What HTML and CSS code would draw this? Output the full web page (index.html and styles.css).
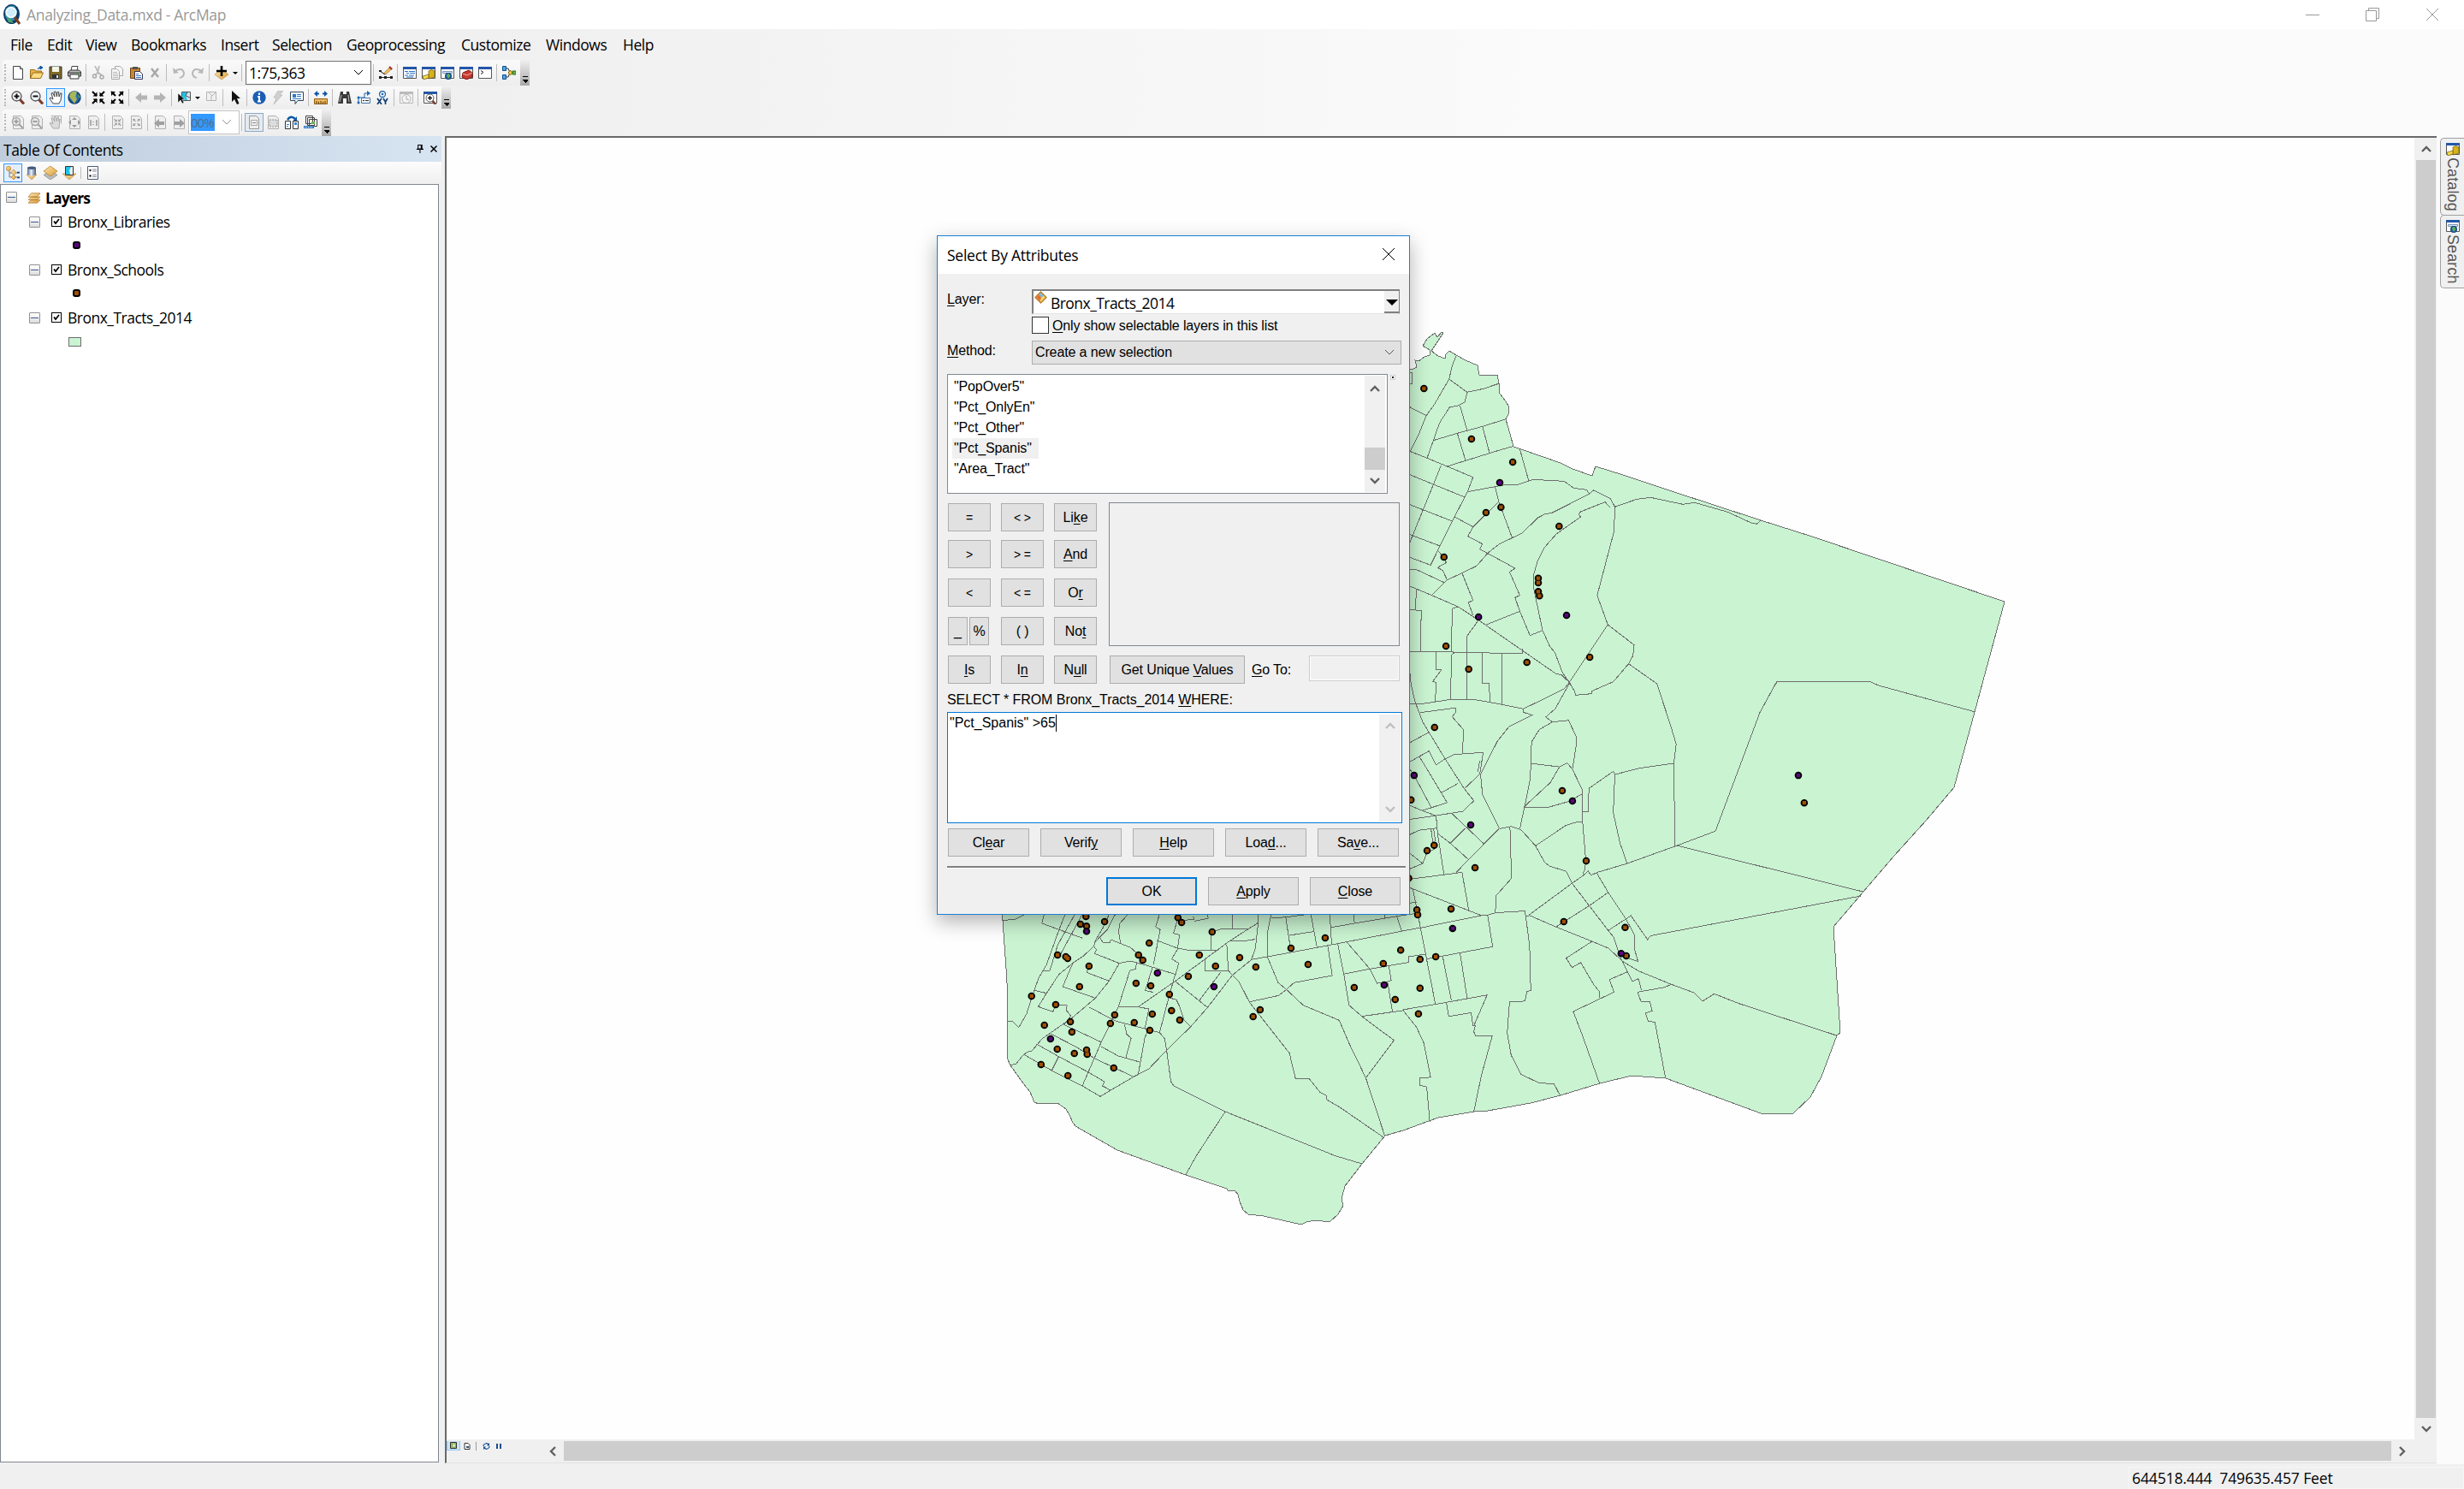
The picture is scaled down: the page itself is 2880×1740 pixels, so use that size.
FILE: index.html
```html
<!DOCTYPE html>
<html lang="en">
<head>
<meta charset="utf-8">
<title>Analyzing_Data.mxd - ArcMap</title>
<link rel="stylesheet" href="styles.css">
</head>
<body>
<svg class="defs" width="0" height="0" aria-hidden="true">
  <defs>
    <linearGradient id="gold" x1="0" y1="0" x2="1" y2="1"><stop offset="0" stop-color="#fde6a8"/><stop offset="1" stop-color="#dc9c3c"/></linearGradient>
    <linearGradient id="steel" x1="0" x2="1"><stop offset="0" stop-color="#5a7090"/><stop offset=".45" stop-color="#e4eefb"/><stop offset="1" stop-color="#45597a"/></linearGradient>
    <radialGradient id="sea"><stop offset="0" stop-color="#4aa0e0"/><stop offset="1" stop-color="#0c3a78"/></radialGradient>
  </defs>
  <symbol id="app" viewBox="0 0 20 24"><ellipse cx="9.500" cy="11.500" rx="9.500" ry="11.500" fill="#0d3b66"/><path d="M2 7Q6 0 13 2L16 8 14 18 6 21 2 14Z" fill="#2f8bb5"/><path d="M4 15l5 3 3 4-6-1z" fill="#4aa564"/><circle cx="9" cy="9.500" r="5.800" fill="#cdeefa" stroke="#f4fbff" stroke-width="1.800"/><path d="M13 15l6 8" stroke="#7a3b1d" stroke-width="3"/></symbol>
  <symbol id="new" viewBox="0 0 16 16"><path d="M2.500.5h8l3 3v12h-11z" fill="#fff" stroke="#444"/><path d="M10.500.5v3h3" fill="#cfe0f5" stroke="#444"/></symbol>
  <symbol id="open" viewBox="0 0 16 16"><path d="M.5 14.500v-10h5l1 1.500h7v3" fill="#e9b64c" stroke="#9a6b14"/><path d="M.5 14.500l3-6.500h12l-3 6.500z" fill="#fbdc84" stroke="#9a6b14"/><path d="M9 4q1-3 4-2M12 0l3 2-3 2z" fill="#0b57a4" stroke="#0b57a4"/></symbol>
  <symbol id="save" viewBox="0 0 16 16"><path d="M1 1h14v14H1z" fill="#806a22" stroke="#333"/><path d="M4 1h8v6H4z" fill="#f3f3e8"/><path d="M4 10h8v5H4z" fill="#333"/><path d="M9 11h2v3H9z" fill="#eee"/></symbol>
  <symbol id="print" viewBox="0 0 16 16"><path d="M4 6L5 .5h7L11 6" fill="#fff" stroke="#444"/><path d="M.5 7l3-2h10l2 2v5H.5z" fill="#bbb" stroke="#333"/><path d="M3 10h10v5H3z" fill="#fff" stroke="#333"/><path d="M1 8h14" stroke="#333"/><path d="M12 9h2v1h-2z" fill="#2a2"/></symbol>
  <symbol id="cut" viewBox="0 0 16 16"><path d="M4 0l5 10M9 0L7 8l-3 3M8 8l4 3" stroke="#b5b5b5" stroke-width="1.600" fill="none"/><circle cx="3.500" cy="12" r="2" fill="none" stroke="#aaa" stroke-width="1.500"/><circle cx="12" cy="13" r="2" fill="none" stroke="#aaa" stroke-width="1.500"/></symbol>
  <symbol id="copy" viewBox="0 0 16 16"><path d="M5.500.5h6l3 3v8h-9z" fill="#f4f4f4" stroke="#aaa"/><path d="M1.500 3.500h6l3 3v9h-9z" fill="#f4f4f4" stroke="#aaa"/><path d="M3 7.500h5M3 9.500h6M3 11.500h6M3 13.500h6" stroke="#bbb"/></symbol>
  <symbol id="paste" viewBox="0 0 16 16"><path d="M1.500 2.500h11v12h-11z" fill="#c98532" stroke="#6b4413"/><path d="M4 1h6v3H4z" fill="#555"/><path d="M6.500 6.500h6l3 3v6h-9z" fill="#fff" stroke="#335"/><path d="M8 9.500h3M8 11.500h6M8 13.500h6" stroke="#3d74b8"/></symbol>
  <symbol id="del" viewBox="0 0 16 16"><path d="M4 3l8 10M12 3L4 13" stroke="#a8a8a8" stroke-width="2.500"/></symbol>
  <symbol id="undo" viewBox="0 0 16 16"><path d="M3 6q9-5 11 2 0 5-5 6" stroke="#b8b8b8" stroke-width="2" fill="none"/><path d="M1 2l1 7 6-1z" fill="#b8b8b8"/></symbol>
  <symbol id="redo" viewBox="0 0 16 16"><path d="M13 6Q4 1 2 8q0 5 5 6" stroke="#b8b8b8" stroke-width="2" fill="none"/><path d="M15 2l-1 7-6-1z" fill="#b8b8b8"/></symbol>
  <symbol id="add" viewBox="0 0 16 16"><path d="M8 4l8 6-8 6-8-6z" fill="url(#gold)" stroke="#b88434" stroke-width=".6"/><path d="M8 0v12M2 6h12" stroke="#000" stroke-width="2.600"/></symbol>
  <symbol id="edit" viewBox="0 0 16 16"><path d="M5 9L13 1l2.500 2L8 10z" fill="#edbd55" stroke="#966" stroke-width=".6"/><path d="M12 1l3 3" stroke="#a52f24" stroke-width="2"/><path d="M1 6l6 4M1 13.500h14" stroke="#222" fill="none"/><path d="M0 12h3v3H0zM6 12h3v3H6zM13 12h3v3h-3zM0 5h3v2H0z" fill="#222"/></symbol>
  <symbol id="win" viewBox="0 0 16 16"><path d="M.5 1.500h15v13H.5z" fill="#fff" stroke="#555"/><path d="M0 1h16v3H0z" fill="#2357a8"/></symbol>
  <symbol id="toc" viewBox="0 0 16 16"><use href="#win"/><path d="M2 6.500h4M7 6.500h7M4 8.500h3M8 8.500h6M2 11h4M7 11h6M4 13h8" stroke="#2a72c8"/></symbol>
  <symbol id="catalog" viewBox="0 0 16 16"><use href="#win"/><path d="M8 6q3-3 7 0v7l-7 2z" fill="#d8b21e" stroke="#6b5608" stroke-width=".7"/><path d="M1 12l7-2v4l-6 2z" fill="#f3d94b" stroke="#6b5608" stroke-width=".7"/></symbol>
  <symbol id="search" viewBox="0 0 16 16"><use href="#win"/><path d="M2.500 6.500h11v2h-11z" fill="#dceafa" stroke="#7a93b5"/><circle cx="9" cy="12" r="4" fill="url(#sea)"/><path d="M7 10l3-1 1 3-2 3z" fill="#5fb54a"/></symbol>
  <symbol id="toolbox" viewBox="0 0 16 16"><use href="#win"/><path d="M4 8l7-3 4 3v5l-7 3-5-3z" fill="#c93a2e" stroke="#7a1610"/><path d="M4 9l5 2 6-3" stroke="#f5b5a8" fill="none"/></symbol>
  <symbol id="python" viewBox="0 0 16 16"><use href="#win"/><path d="M3 5.500l3 2-3 2" stroke="#222" fill="none"/></symbol>
  <symbol id="model" viewBox="0 0 16 16"><path d="M4 3h3l2 5h3M4 13h3l2-5" stroke="#333" fill="none"/><path d="M.5.5h4v5h-4zM.5 10.500h4v5h-4z" fill="#4aa3e8" stroke="#12528f"/><path d="M7 8l2.500-3L12 8l-2.500 3z" fill="#f0c64c" stroke="#886510"/><path d="M12 6h4v4h-4z" fill="#63b83e" stroke="#2b6d14"/></symbol>
  <symbol id="zin" viewBox="0 0 16 16"><path d="M10 10l5 5.500" stroke="#7e3a2a" stroke-width="3"/><circle cx="6.500" cy="6.500" r="5.500" fill="#f2f7fc" stroke="#555" stroke-width="1.300"/><path d="M3.500 6.500h6M6.500 3.500v6" stroke="#111" stroke-width="2"/></symbol>
  <symbol id="zout" viewBox="0 0 16 16"><path d="M10 10l5 5.500" stroke="#7e3a2a" stroke-width="3"/><circle cx="6.500" cy="6.500" r="5.500" fill="#f2f7fc" stroke="#555" stroke-width="1.300"/><path d="M3.500 6.500h6" stroke="#111" stroke-width="2"/></symbol>
  <symbol id="hand" viewBox="0 0 16 16"><path d="M5 15L1 9l1-1 3 2L3 3l1.500-.5L7 7 6 1.500 8 1l1.500 6L10 1.500h1.500L12 7l1.500-4H15l-1 8-2 4z" fill="#fff" stroke="#333" stroke-width=".9"/></symbol>
  <symbol id="globe" viewBox="0 0 16 16"><circle cx="8" cy="8" r="7.700" fill="url(#sea)"/><path d="M3 3q5-4 8-1l-2 5 2 3-3 5-3-4-3-4z" fill="#a9b75a"/><path d="M12 4l3 3-2 2z" fill="#5d9c43"/></symbol>
  <symbol id="fixin" viewBox="0 0 16 16"><path d="M1 1l5 5M15 1l-5 5M1 15l5-5M15 15l-5-5" stroke="currentColor" stroke-width="2"/><path d="M6.500 1.500v5h-5zM9.500 1.500v5h5zM6.500 14.500v-5h-5zM9.500 14.500v-5h5z" fill="currentColor"/></symbol>
  <symbol id="fixout" viewBox="0 0 16 16"><path d="M1 1l5 5M15 1l-5 5M1 15l5-5M15 15l-5-5" stroke="currentColor" stroke-width="2"/><path d="M1 6V1h5zM15 6V1h-5zM1 10v5h5zM15 10v5h-5z" fill="currentColor"/></symbol>
  <symbol id="back" viewBox="0 0 16 16"><path d="M1 8l7-6v3.500h7v5H8V14z" fill="#b4b4b4"/></symbol>
  <symbol id="fwd" viewBox="0 0 16 16"><path d="M15 8L8 2v3.500H1v5h7V14z" fill="#b4b4b4"/></symbol>
  <symbol id="selfeat" viewBox="0 0 16 16"><path d="M5.500 1.500h10v10h-10z" fill="#d8e6ee" stroke="#555"/><path d="M6 2h6l-2 4 2 5H6z" fill="#1fc3ea"/><path d="M12 2l-2 4 5 2" stroke="#555" fill="none"/><path d="M1 3v11l3-3 2 4 2-1-2-4h3z" fill="#111" stroke="#fff" stroke-width=".5"/></symbol>
  <symbol id="clrsel" viewBox="0 0 16 16"><path d="M2.500 1.500h11v10h-11z" fill="#f0f0f0" stroke="#b5b5b5"/><path d="M5 2l4 4 4-4M8 6v5" stroke="#b5b5b5" fill="none"/></symbol>
  <symbol id="arrow" viewBox="0 0 16 16"><path d="M4 0v13l3-3 3 6 2.500-1L10 9h4z" fill="#111"/></symbol>
  <symbol id="info" viewBox="0 0 16 16"><circle cx="8" cy="8" r="7.700" fill="#1b5fb4"/><path d="M8 2.500v2.500M6 7h2v5.500M6 12.500h4" stroke="#fff" stroke-width="2" fill="none"/></symbol>
  <symbol id="bolt" viewBox="0 0 16 16"><path d="M8 0h6l-4 5h3L3 16l3-8H3z" fill="#d0d0d0" stroke="#b0b0b0" stroke-width=".6"/></symbol>
  <symbol id="popup" viewBox="0 0 16 16"><path d="M.5 1.500h15v10H9l-3 4v-4H.5z" fill="#fff" stroke="#345"/><path d="M3 4h4v4H3z" fill="#2a78c8"/><path d="M8 4.500h5M8 6.500h5M3 9.500h10" stroke="#2a78c8"/></symbol>
  <symbol id="measure" viewBox="0 0 16 16"><path d="M0 3.500L4 0v2.500h2v2H4V7zM16 3.500L12 0v2.500h-2v2h2V7z" fill="#0e57a5"/><path d="M.5 9.500h15v6H.5z" fill="#e9b45c" stroke="#915f14"/><path d="M3 12v3M5.500 13v2M8 12v3M10.500 13v2M13 12v3" stroke="#5d3c08"/></symbol>
  <symbol id="find" viewBox="0 0 16 16"><path d="M3 1h3v3h4V1h3l3 14h-6V9H6v6H0z" fill="#3b3b3b"/><path d="M4 5L2 13M12 5l1 8" stroke="#bbb"/></symbol>
  <symbol id="route" viewBox="0 0 16 16"><path d="M2 14V8h7V3h4" stroke="#1a66b0" fill="none"/><path d="M12 0l4 3-4 3z" fill="#1a66b0"/><circle cx="2" cy="14" r="1.500" fill="#1a66b0"/><circle cx="2" cy="8" r="1.500" fill="#1a66b0"/><path d="M5.500 8.500h10v6h-10z" fill="#eef4fb" stroke="#4c77a5"/><path d="M7 11.500h2M10 11.500h4" stroke="#333"/></symbol>
  <symbol id="xy" viewBox="0 0 16 16"><circle cx="8" cy="4" r="3.500" fill="none" stroke="#1a66b0" stroke-width="1.300"/><circle cx="8" cy="4" r="1.300" fill="#1a66b0"/><path d="M2 9l5 7M7 9l-5 7M9 9l2.500 4V16M14 9l-2.500 4" stroke="#123f75" stroke-width="1.700" fill="none"/></symbol>
  <symbol id="time" viewBox="0 0 16 16"><path d="M.5 1.500h15v13H.5z" fill="#f1f1f1" stroke="#bbb"/><path d="M0 1h16v3H0z" fill="#bbb"/><circle cx="8" cy="9.500" r="5" fill="#f5f5f5" stroke="#b5b5b5"/><path d="M8 6v4l3 1" stroke="#aaa" fill="none"/></symbol>
  <symbol id="viewer" viewBox="0 0 16 16"><use href="#win"/><path d="M10 11l4 5" stroke="#7e3a2a" stroke-width="2.500"/><circle cx="7.500" cy="8.500" r="4.500" fill="#fff" stroke="#555"/><path d="M5 8.500h5M7.500 6v5" stroke="#111" stroke-width="1.400"/></symbol>
  <symbol id="gpage" viewBox="0 0 16 16"><path d="M2.500.5h9l3 3v12h-12z" fill="#eee" stroke="#b0b0b0"/></symbol>
  <symbol id="gzin" viewBox="0 0 16 16"><use href="#gpage"/><circle cx="6" cy="7" r="4.500" fill="#e8e8e8" stroke="#a5a5a5" stroke-width="1.500"/><path d="M3.500 7h5M6 4.500v5M9 10l5 5" stroke="#a0a0a0" stroke-width="1.800"/></symbol>
  <symbol id="gzout" viewBox="0 0 16 16"><use href="#gpage"/><circle cx="6" cy="7" r="4.500" fill="#e8e8e8" stroke="#a5a5a5" stroke-width="1.500"/><path d="M3.500 7h5M9 10l5 5" stroke="#a0a0a0" stroke-width="1.800"/></symbol>
  <symbol id="ghand" viewBox="0 0 16 16"><path d="M2.500.5h12v9" fill="none" stroke="#b0b0b0"/><path d="M5 15L1 9l1-1 3 2L3 3l1.500-.5L7 7 6 2 8 1.500 9.500 7 10 2h1.500L12 7l1-3-1 11z" fill="#ddd" stroke="#aaa"/></symbol>
  <symbol id="gwhole" viewBox="0 0 16 16"><use href="#gpage"/><path d="M8 2l3 3H5zM8 14l3-3H5zM1 8l3-3v6zM15 8l-3-3v6z" fill="#999"/></symbol>
  <symbol id="g11" viewBox="0 0 16 16"><use href="#gpage"/><path d="M4 6h1v6M8 7v1M8 10v1M11 6h1v6" stroke="#999" stroke-width="1.500" fill="none"/></symbol>
  <symbol id="gin" viewBox="0 0 16 16"><use href="#gpage"/><g transform="translate(4 3.500) scale(.56)" color="#999"><use href="#fixin" width="16" height="16"/></g></symbol>
  <symbol id="gout" viewBox="0 0 16 16"><use href="#gpage"/><g transform="translate(4 3.500) scale(.56)" color="#999"><use href="#fixout" width="16" height="16"/></g></symbol>
  <symbol id="gback" viewBox="0 0 16 16"><use href="#gpage"/><path d="M1 9l6-5v3h6v4H7v3z" fill="#a0a0a0"/></symbol>
  <symbol id="gfwd" viewBox="0 0 16 16"><use href="#gpage"/><path d="M15 9L9 4v3H3v4h6v3z" fill="#a0a0a0"/></symbol>
  <symbol id="gdraft" viewBox="0 0 16 16"><path d="M2.500.5h8l3 3v12h-11z" fill="#eee" stroke="#999"/><path d="M4.500 5.500h7v6h-7z" fill="none" stroke="#aaa"/><path d="M6 8.500h4" stroke="#888"/></symbol>
  <symbol id="gfocus" viewBox="0 0 16 16"><use href="#gpage"/><path d="M4 5h9v8H4z" fill="#ddd" stroke="#999" stroke-dasharray="2 1"/></symbol>
  <symbol id="change" viewBox="0 0 16 16"><path d="M3 5q4-6 9-1" stroke="#0e57a5" stroke-width="2.500" fill="none"/><path d="M14 1v6H9z" fill="#0e57a5"/><path d="M.5 6.500h6v9h-6zM9.500 6.500h6v9h-6z" fill="#fff" stroke="#333"/><path d="M2 10.500h3M2 12.500h2" stroke="#3a82c8"/><path d="M11 8h3v3h-3z" fill="#3a82c8"/></symbol>
  <symbol id="ddp" viewBox="0 0 16 16"><path d="M2.500.5h8v9h-8zM4.500 2.500h8v9h-8zM6.500 4.500h9v8h-9z" fill="#fff" stroke="#444"/><path d="M9 7h4v3H9z" fill="#6db255"/><path d="M0 12h12v3H0z" fill="#2a78c8"/><path d="M1 13.500h10" stroke="#fff" stroke-dasharray="1 1"/></symbol>
  <symbol id="tree" viewBox="0 0 16 16"><path d="M4 5v8h5M4 8h5M10 8h6M10 13h6" stroke="#777" fill="none"/><circle cx="3" cy="3" r="2.700" fill="url(#gold)" stroke="#b88434" stroke-width=".7"/><path d="M9 4l3 3.500L9 11 6 7.500zM9 10l3 3-3 3-3-3z" fill="url(#gold)" stroke="#b88434" stroke-width=".7"/><path d="M13 7.500h3M13 13.500h3" stroke="#123f75" stroke-width="1.500"/></symbol>
  <symbol id="source" viewBox="0 0 16 16"><path d="M2 10h12l-6 6z" fill="url(#gold)" stroke="#b88434" stroke-width=".6"/><path d="M3 2q5-3 10 0v8q-5 3-10 0z" fill="url(#steel)"/><ellipse cx="8" cy="2.200" rx="5" ry="1.700" fill="#44597b"/></symbol>
  <symbol id="vis" viewBox="0 0 16 16"><path d="M8 5l8 5.500L8 16 0 10.500z" fill="#bbb" stroke="#777" stroke-width=".6"/><path d="M8 0l8 6-8 6-8-6z" fill="url(#gold)" stroke="#b88434" stroke-width=".8"/></symbol>
  <symbol id="tocsel" viewBox="0 0 16 16"><path d="M0 9h16l-8 7z" fill="url(#gold)" stroke="#b88434" stroke-width=".6"/><path d="M3.500.5h9v10h-9z" fill="#e8eef2" stroke="#333"/><path d="M4 1h6L8 5l1 5H4z" fill="#1fc3ea"/></symbol>
  <symbol id="opts" viewBox="0 0 16 16"><path d="M2.500.5h12v15h-12z" fill="#fff" stroke="#4b5a74"/><circle cx="5.500" cy="5" r="1.200" fill="#222"/><circle cx="5.500" cy="11.500" r="1.200" fill="#222"/><path d="M8 4h5M8 6h5M8 10.500h5M8 12.500h5" stroke="#889"/></symbol>
  <symbol id="frame" viewBox="0 0 16 16"><path d="M0 15l4-4h12l-4 4zM0 11l4-4h12l-4 4zM0 7l4-5h12l-4 5z" fill="url(#gold)" stroke="#a8742a" stroke-width=".8"/></symbol>
  <symbol id="layer" viewBox="0 0 16 16"><path d="M8 0l8 8-8 8-8-8z" fill="#b88434"/><path d="M8 2.500l5.500 5.500L8 13.500 2.500 8z" fill="#f7dc6a"/><path d="M8 2.500l3.500 3.500-3 2.500L6 4.500z" fill="#77b7e8"/><path d="M2.500 8L6 4.500 8.500 8.500 7 12.500z" fill="#ee6a2d"/></symbol>
  <symbol id="pin" viewBox="0 0 10 12"><path d="M3 1.500h5v5H3zM7 1v6M1 7h9M5.500 7v5" stroke="#000" stroke-width="1.200" fill="none"/></symbol>
  <symbol id="x" viewBox="0 0 16 16"><path d="M1 1l14 14M15 1L1 15" stroke="currentColor" stroke-width="var(--w,1)" fill="none"/></symbol>
  <symbol id="chev" viewBox="0 0 12 8"><path d="M1 1l5 5 5-5" stroke="currentColor" stroke-width="var(--w,1)" fill="none"/></symbol>
  <symbol id="dataview" viewBox="0 0 8 8"><path d="M.5.5h7v7h-7z" fill="#9cb55c" stroke="#333"/><path d="M3 4l2-2 1 3-2 1z" fill="#dcecf5"/></symbol>
  <symbol id="layoutview" viewBox="0 0 8 8"><path d="M1 .5h4l2 2v5H1z" fill="#fff" stroke="#333"/><path d="M3 4h3v2H3z" fill="#357"/></symbol>
  <symbol id="refresh" viewBox="0 0 9 8"><path d="M1 4V3q3-4 6-1M8 4v1Q5 9 2 6" stroke="#134f8f" stroke-width="1.200" fill="none"/><path d="M8 0v3.500H5zM1 8V4.500h3z" fill="#134f8f"/></symbol>
</svg>

<div class="titlebar">
  <svg class="appicon"><use href="#app"/></svg>
  <span class="apptitle">Analyzing_Data.mxd - ArcMap</span>
  <div class="winctl">
    <svg viewBox="0 0 16 16"><path d="M0 8.500h16" stroke="#999"/></svg>
    <svg viewBox="0 0 16 16"><path d="M.5 3.500h12v12H.5zM3.500 3.500v-3h12v12h-3" stroke="#999" fill="none"/></svg>
    <svg viewBox="0 0 16 16" class="grey"><use href="#x"/></svg>
  </div>
</div>

<div class="chrome">
  <nav class="menu"><span>File</span><span>Edit</span><span>View</span><span>Bookmarks</span><span>Insert</span><span>Selection</span><span>Geoprocessing</span><span>Customize</span><span>Windows</span><span>Help</span></nav>

  <div class="bar bar1">
    <i class="grip"></i>
    <b><svg><use href="#new"/></svg></b><b><svg><use href="#open"/></svg></b><b><svg><use href="#save"/></svg></b><b><svg><use href="#print"/></svg></b>
    <i class="sep"></i>
    <b><svg><use href="#cut"/></svg></b><b><svg><use href="#copy"/></svg></b><b><svg><use href="#paste"/></svg></b><b><svg><use href="#del"/></svg></b>
    <i class="sep"></i>
    <b><svg><use href="#undo"/></svg></b><b><svg><use href="#redo"/></svg></b>
    <i class="sep"></i>
    <b><svg><use href="#add"/></svg></b><i class="drop"></i>
    <i class="sep"></i>
    <div class="scale"><span>1:75,363</span><svg class="chev"><use href="#chev"/></svg></div>
    <i class="sep"></i>
    <b><svg><use href="#edit"/></svg></b>
    <i class="sep"></i>
    <b><svg><use href="#toc"/></svg></b><b><svg><use href="#catalog"/></svg></b><b><svg><use href="#search"/></svg></b><b><svg><use href="#toolbox"/></svg></b><b><svg><use href="#python"/></svg></b>
    <i class="sep"></i>
    <b><svg><use href="#model"/></svg></b>
    <i class="end"></i>
  </div>

  <div class="bar bar2">
    <i class="grip"></i>
    <b><svg><use href="#zin"/></svg></b><b><svg><use href="#zout"/></svg></b><b class="on"><svg><use href="#hand"/></svg></b><b><svg><use href="#globe"/></svg></b>
    <i class="sep"></i>
    <b><svg><use href="#fixin"/></svg></b><b><svg><use href="#fixout"/></svg></b>
    <i class="sep"></i>
    <b><svg><use href="#back"/></svg></b><b><svg><use href="#fwd"/></svg></b>
    <i class="sep"></i>
    <b><svg><use href="#selfeat"/></svg></b><i class="drop"></i><b><svg><use href="#clrsel"/></svg></b>
    <i class="sep"></i>
    <b><svg><use href="#arrow"/></svg></b>
    <i class="sep"></i>
    <b><svg><use href="#info"/></svg></b><b><svg><use href="#bolt"/></svg></b><b><svg><use href="#popup"/></svg></b>
    <i class="sep"></i>
    <b><svg><use href="#measure"/></svg></b>
    <i class="sep"></i>
    <b><svg><use href="#find"/></svg></b><b><svg><use href="#route"/></svg></b><b><svg><use href="#xy"/></svg></b>
    <i class="sep"></i>
    <b><svg><use href="#time"/></svg></b>
    <i class="sep"></i>
    <b><svg><use href="#viewer"/></svg></b>
    <i class="end"></i>
  </div>

  <div class="bar bar3">
    <i class="grip"></i>
    <b><svg><use href="#gzin"/></svg></b><b><svg><use href="#gzout"/></svg></b><b><svg><use href="#ghand"/></svg></b><b><svg><use href="#gwhole"/></svg></b><b><svg><use href="#g11"/></svg></b>
    <i class="sep"></i>
    <b><svg><use href="#gin"/></svg></b><b><svg><use href="#gout"/></svg></b>
    <i class="sep"></i>
    <b><svg><use href="#gback"/></svg></b><b><svg><use href="#gfwd"/></svg></b>
    <div class="percent"><span>00%</span><svg class="chev"><use href="#chev"/></svg></div>
    <i class="sep"></i>
    <b class="on dim"><svg><use href="#gdraft"/></svg></b><b><svg><use href="#gfocus"/></svg></b><b><svg><use href="#change"/></svg></b><b><svg><use href="#ddp"/></svg></b>
    <i class="end"></i>
  </div>
</div>

<main class="work">
  <aside class="tocpane">
    <header class="tochead"><span>Table Of Contents</span><svg class="pin"><use href="#pin"/></svg><svg class="tclose"><use href="#x"/></svg></header>
    <div class="tocbar">
      <b class="on"><svg><use href="#tree"/></svg></b><b><svg><use href="#source"/></svg></b><b><svg><use href="#vis"/></svg></b><b><svg><use href="#tocsel"/></svg></b>
      <i class="sep"></i>
      <b><svg><use href="#opts"/></svg></b>
    </div>
    <div class="tree">
      <div class="node root"><i class="exp"></i><svg class="frame"><use href="#frame"/></svg><strong>Layers</strong></div>
      <div class="node"><i class="exp"></i><i class="chk"><svg viewBox="0 0 8 8"><path d="M1 3.500l2 2.500 4-5" stroke="#000" stroke-width="1.800" fill="none"/></svg></i><span>Bronx_Libraries</span></div>
      <div class="sym"><i class="dot lib"></i></div>
      <div class="node"><i class="exp"></i><i class="chk"><svg viewBox="0 0 8 8"><path d="M1 3.500l2 2.500 4-5" stroke="#000" stroke-width="1.800" fill="none"/></svg></i><span>Bronx_Schools</span></div>
      <div class="sym"><i class="dot sch"></i></div>
      <div class="node"><i class="exp"></i><i class="chk"><svg viewBox="0 0 8 8"><path d="M1 3.500l2 2.500 4-5" stroke="#000" stroke-width="1.800" fill="none"/></svg></i><span>Bronx_Tracts_2014</span></div>
      <div class="sym"><i class="patch"></i></div>
    </div>
  </aside>

  <section class="mapframe">
    <div class="maprow">
      <svg class="map" viewBox="522 162 2300 1521" width="2300" height="1521">
        <path class="land" d="M1500 432H1652L1656 430 1654 422 1658 423 1665 418 1671 416V410L1663 405 1668 397 1677 390 1680 395 1685 389 1687 390 1681 399 1673 411 1681 417 1689 420 1690 415 1694 411 1702 416 1713 422 1727 428 1729 439 1750 439 1752 449 1753 461 1760 470 1764 477 1763 485 1760 491 1765 508 1769 523 1778 526 1824 542 1838 549 1861 557 1863 551 1865 546 1897 556 1957 576 2003 591 2058 609 2118 628 2343 704 2308 833 2284 921 2251 960 2214 1001 2178 1043 2143 1084 2151 1208 2147 1211 2129 1259 2116 1283 2096 1302 2081 1303 2058 1302 1947 1261 1907 1258 1870 1267 1824 1281 1789 1290 1739 1299 1723 1300 1681 1307 1640 1322 1619 1328 1592 1361 1572 1387 1568 1402 1570 1410 1564 1420 1554 1429 1537 1427 1527 1429 1521 1432 1477 1422 1459 1420 1453 1415 1449 1405 1447 1397 1444 1393 1435 1392 1434 1390 1386 1374 1306 1345 1257 1317 1254 1313 1250 1304 1246 1297 1236 1290 1214 1291 1209 1289 1204 1277 1196 1267 1181 1246 1177 1237 1177 1195 1178 1167 1176 1133 1172 1077 1171 1050H1400V600Z"/>
        <g class="lines">
          <path transform="translate(1640 370) scale(.4592 .33333)" d="M135 140L125 175 117 222 80 310 59 350 40 415 17 478M117 222L163 268 204 256 243 238M163 268L157 303 138 316 119 320 95 370 86 400 77 437 61 499M145 316L163 402M77 437L138 412 202 388 262 362M138 412L159 507M202 388L220 481M280 458L255 467 112 528 61 499 17 475M17 320L59 350M97 524L17 795M112 528L178 566 164 617 125 720 70 874 17 847M17 557L157 636M17 662L125 720M131 705L178 740M17 767L94 807M164 617L234 599 260 593 290 593 331 574 410 580 434 604 467 610 474 625 485 611 527 640 539 670 537 755 494 980 521 1083 588 1154 585 1192 574 1220 535 1283 480 1316V1325L439 1330 437 1318 423 1285M297 467L320 580M234 599L243 650 277 776M243 652L178 740 165 773 202 800 195 818 285 885 271 898 297 980 285 988 297 1036 323 1121 355 1103M474 625L380 690 360 696 343 708 303 762 245 800 217 830 187 877 150 902 112 926 73 980M112 926L101 893 88 883 110 865 90 824M17 890H34L106 936M17 948L73 980 140 1020 192 1067 390 1256 402 1258 423 1285M150 902L178 998 166 1005 178 1050M34 960L31 1030M17 1030L46 1034 45 1177M140 1020L125 1027 123 1177M192 1067L162 1124V1345M212 1083L297 1036M17 1177H125L130 1181 304 1183V1168M84 1178V1240L97 1242 75 1283 84 1285 82 1352M130 1181L123 1190 121 1345M201 1182V1288H218L222 1355M252 1183V1363M17 1360H50L121 1345H180L249 1362 306 1378 378 1330 410 1308 423 1285M539 670L595 643 630 637 712 661 742 655 826 688 886 726 900 730 910 718M527 672L514 653 450 688 447 697 452 705 390 765 360 812 343 857 333 905V960L355 1103 373 1158 386 1180 406 1252 423 1285M521 1083L423 1285M574 1220L646 1290M1454 1388L1210 1296 1188 1282H952L948 1292M17 200H23L22 240H17"/>
          <path transform="translate(1640 800) scale(.4592 .34444)" d="M17 -40L20 0 30 60 50 130 107 255 155 355 180 397 152 433 85 447 17 460M306 85V97L328 106 270 145 240 195 215 260 197 307 202 375 245 490M423 0L387 85 363 113 380 130 421 124 441 180 440 215 431 290M380 130L347 155 328 195 326 215 324 320 308 425 297 492M646 0L681 142 695 205 689 270 692 550M948 0L908 98 795 500 697 549 570 610 494 640 478 650 471 635 459 650 430 677 320 785M697 549L1172 706M1165 720L630 855 622 868 580 787 522 837M43 98L133 82V98L125 112 153 155 152 237M17 200L64 166M17 265L66 228 84 275 107 255 130 240 204 233 195 307 155 357M195 260L190 300M41 246L112 403 50 430M97 370L140 338M17 290L28 311 71 418M17 413L48 430 84 448 88 510 104 647M17 512L40 497 84 490M71 492L76 540M78 494L82 535M124 440L204 541M158 490L120 541M88 508L120 541 166 596M245 490L135 640M17 663L150 640 167 768M17 575L50 610 17 628M50 610L60 575 80 560M17 692L197 785H215L235 777 310 771 312 787H320M245 492L275 484 300 495 337 550 360 605 373 619 415 636 430 677 522 837 536 860 552 925 570 975 584 1010 599 1001 607 1040M272 486L276 660 236 720 235 777M337 550L415 480 440 470H457M457 374V435H471L473 355 535 297 539 308 535 438 552 540 570 610M539 308L600 287 689 270M324 270L398 282 418 269 431 290 456 360 457 470 465 600 463 630 457 645M398 282L375 335 310 415M310 419H370L420 400 456 374M492 640L522 708 568 800 588 850 590 905 598 942 565 928M522 708L475 752 389 825M320 785L389 825 481 874 522 897 560 943 600 975 683 1020 740 1048 762 1077 792 1052 855 1085 1105 1194M683 1020L665 1030 597 1046 606 1080 628 1078 634 1110 617 1118 624 1145 641 1148 668 1339M481 874L415 931 430 963 452 946 485 1020 500 1045 501 1068M570 978L525 1004 537 1046 433 1112 455 1188 500 1356M312 787L322 890 325 1040 315 1045 310 1077 271 1078 265 1185 275 1260 300 1325 347 1355 384 1357 400 1398M25 697L60 935 82 1086M17 744L34 741M45 828L197 787M215 785L228 892 60 934M101 927L123 1075M145 914L163 1067M0 1106L110 1081 214 1056 180 1160M110 1081L116 1129 173 1116 178 1160H184L180 1180 184 1195 227 1194 199 1330 180 1452M0 1108L34 1165 53 1220 70 1335 43 1338V1362L60 1368 68 1486"/>
          <path transform="translate(1150 1050) scale(.35714 .33333)" d="M62 80L105 75 135 58M197 58L190 90 323 142M266 58L245 115 205 235 180 280 158 345 140 407 114 455 95 435 77 433M298 58L242 165 215 258H195M322 58L245 210M410 58L390 105 365 150 360 170 325 205 290 230 245 270 205 335 178 382 226 400 235 375 272 378 270 395 285 415M430 58L405 110 360 160M166 325L205 335M472 58L445 90 441 120 447 158M380 140L390 158H413L415 147 480 175 507 200M360 170L368 182 363 196 443 230 480 222 535 238 630 270M443 230L410 292 365 352 290 420 190 495 155 540H145L130 550 105 583 88 587M340 245L338 263 410 292M290 232L258 312 365 352M500 225L497 250 478 255 440 383 384 507 322 660M552 245L528 325 555 332M627 292L505 383 440 384M343 383L430 432 575 473M505 383L540 390 527 458M898 58V88L865 110 800 155 627 292M575 58L562 102 577 112 555 235M640 58L620 125 640 130 634 180 615 215 638 230 620 292 605 350 575 473M567 150L633 177 670 184H768M805 152H850L887 146M743 128V182M747 120L778 109H865M813 58V109M640 82L688 75 685 65M690 82L735 72 730 58M723 215V256H800L795 165M898 88L888 180 875 218 813 272 732 385 677 452 598 535 540 600 490 628 415 675 381 697 322 660 222 606 131 550M627 294L732 385M776 260L705 360M800 256L835 295 870 368 1000 545 1020 635H1065L1100 682 1120 693 1122 708 1165 735 1305 838M870 365L965 343 990 322 1015 298 1140 273 1125 165M940 58L927 130V205L963 298 990 322 1045 377 1163 430 1195 510 1250 632 1312 835M875 217L1005 192 1187 155 1428 105M940 72L990 68 1062 58M988 70L1003 175M1000 132L1078 119M1070 58L1090 172M1132 58L1138 162M1138 104L1213 90 1312 72 1352 65 1410 56M1210 58L1213 90M1312 58V72M1352 67L1368 118M1187 155L1262 248 1287 300 1310 298M1158 162L1178 268 1195 377 1237 416 1342 500 1250 632M1178 268L1262 250 1390 227V207L1445 198M1325 238L1333 290 1310 298 1322 300 1337 400M1237 416L1375 395M605 350L630 358 640 380 655 428 677 452M575 473L592 495 598 535 612 645 622 660 790 750 1150 905 1238 933M790 750L695 905 660 973M285 415L262 445 385 507M384 522L440 555 513 577M220 478L300 522 365 565 490 628M172 513L245 557 342 612 395 645 388 660 415 675M460 443L468 480 482 492 465 560M535 470L527 490 505 620M245 557L222 606"/>
        </g>
        <g class="pts sch">
          <g transform="translate(1640 370) scale(.4592 .33333)"><path id="s1" d="M53 255h.1M174 432h.1M279 513h.1M249 671h.1M211 690h.1M397 738h.1M104 846h.1M344 920h.1M344 936h.1M344 967h.1M347 982h.1M109 1158h.1M167 1239h.1M315 1215h.1M475 1197h.1"/><use class="core" href="#s1"/></g>
          <g transform="translate(1640 800) scale(.4592 .34444)"><path id="s2" d="M80 148h.1M20 394h.1M405 363h.1M1021 404h.1M79 548h.1M61 566h.1M183 624h.1M466 601h.1M14 660h.1M35 767h.1M37 784h.1M122 764h.1M409 807h.1M565 827h.1M568 923h.1M83 926h.1M43 935h.1M43 1033h.1M39 1120h.1"/><use class="core" href="#s2"/></g>
          <g transform="translate(1150 1050) scale(.35714 .33333)"><path id="s3" d="M334 66h.1M316 93h.1M336 100h.1M395 84h.1M635 70h.1M647 87h.1M747 120h.1M541 159h.1M241 201h.1M268 207h.1M274 213h.1M344 240h.1M506 201h.1M520 219h.1M705 201h.1M758 240h.1M837 210h.1M890 243h.1M1005 177h.1M1117 141h.1M1061 234h.1M669 276h.1M498 300h.1M546 309h.1M313 312h.1M607 339h.1M156 345h.1M235 375h.1M614 396h.1M551 408h.1M428 411h.1M641 429h.1M492 438h.1M414 441h.1M283 435h.1M198 447h.1M288 471h.1M543 465h.1M904 393h.1M881 417h.1M240 531h.1M296 546h.1M336 534h.1M338 549h.1M187 585h.1M275 624h.1M425 597h.1M1212 315h.1M1307 231h.1M1364 184h.1M1346 357h.1"/><use class="core" href="#s3"/></g>
        </g>
        <g class="pts lib">
          <g transform="translate(1640 370) scale(.4592 .33333)"><path id="l1" d="M246 585h.1M192 1056h.1M416 1050h.1"/><use class="core" href="#l1"/></g>
          <g transform="translate(1640 800) scale(.4592 .34444)"><path id="l2" d="M28 311h.1M431 398h.1M172 479h.1M126 830h.1M555 915h.1M1006 311h.1"/><use class="core" href="#l2"/></g>
          <g transform="translate(1150 1050) scale(.35714 .33333)"><path id="l3" d="M336 118h.1M568 264h.1M753 312h.1M218 495h.1M1310 306h.1"/><use class="core" href="#l3"/></g>
        </g>
      </svg>
      <div class="vscroll"><svg class="chev up"><use href="#chev"/></svg><i></i><svg class="chev"><use href="#chev"/></svg></div>
    </div>
    <div class="hrow">
      <div class="viewbtns"><b class="on"><svg><use href="#dataview"/></svg></b><svg><use href="#layoutview"/></svg><i></i><svg class="rf"><use href="#refresh"/></svg><svg viewBox="0 0 8 8"><path d="M1 1h2v6H1zM5 1h2v6H5z" fill="#134f8f"/></svg></div>
      <svg class="chev left"><use href="#chev"/></svg><i class="thumb"></i><svg class="chev right"><use href="#chev"/></svg>
    </div>
  </section>

  <div class="dock">
    <div class="tab t1"><svg><use href="#catalog"/></svg><span>Catalog</span></div>
    <div class="tab t2"><svg><use href="#search"/></svg><span>Search</span></div>
  </div>
</main>

<footer class="status"><div class="coords">644518.444&nbsp; 749635.457 Feet</div></footer>

<div class="dialog">
  <header><span>Select By Attributes</span><svg><use href="#x"/></svg></header>
  <div class="body">
    <div class="field f1"><label><u>L</u>ayer:</label><div class="layersel"><svg><use href="#layer"/></svg><span>Bronx_Tracts_2014</span><i class="btn3"></i></div></div>
    <div class="only"><i></i><span><u>O</u>nly show selectable layers in this list</span></div>
    <div class="field f2"><label><u>M</u>ethod:</label><div class="method"><span>Create a new selection</span><svg class="chev"><use href="#chev"/></svg></div></div>
    <div class="listrow">
      <div class="list">
        <ul><li>"PopOver5"</li><li>"Pct_OnlyEn"</li><li>"Pct_Other"</li><li><em>"Pct_Spanis"</em></li><li>"Area_Tract"</li></ul>
        <div class="lscroll"><svg class="chev up"><use href="#chev"/></svg><i></i><svg class="chev"><use href="#chev"/></svg></div>
      </div>
      <i class="mini"></i>
    </div>
    <div class="ops">
      <div class="keys">
        <button class="s">=</button><button class="s">&lt; &gt;</button><button>Li<u>k</u>e</button>
        <button class="s">&gt;</button><button class="s">&gt; =</button><button><u>A</u>nd</button>
        <button class="s">&lt;</button><button class="s">&lt; =</button><button>O<u>r</u></button>
        <div class="pair"><button>_</button><button>%</button></div><button>( )</button><button>No<u>t</u></button>
        <button><u>I</u>s</button><button>I<u>n</u></button><button>N<u>u</u>ll</button>
      </div>
      <div class="vals">
        <div class="valbox"></div>
        <div class="uniq"><button>Get Unique <u>V</u>alues</button><span><u>G</u>o To:</span><i></i></div>
      </div>
    </div>
    <div class="where">SELECT * FROM Bronx_Tracts_2014 <u>W</u>HERE:</div>
    <div class="expr"><span>"Pct_Spanis" &gt;65</span><div class="escroll"><svg class="chev up"><use href="#chev"/></svg><svg class="chev"><use href="#chev"/></svg></div></div>
    <div class="acts"><button>Cl<u>e</u>ar</button><button>Verif<u>y</u></button><button><u>H</u>elp</button><button>Loa<u>d</u>...</button><button>Sa<u>v</u>e...</button></div>
    <hr>
    <div class="final"><button class="ok">OK</button><button><u>A</u>pply</button><button><u>C</u>lose</button></div>
  </div>
</div>
</body>
</html>
```
FILE: styles.css
```css
* { box-sizing: border-box; }
html, body { margin: 0; }
body {
  width: 2880px; height: 1740px; overflow: hidden; position: relative;
  display: flex; flex-direction: column;
  background: #f0f0f0; color: #000;
  font: 17.5px/24px "Open Sans", "Noto Sans", sans-serif; letter-spacing: -.45px;
}
.defs { position: absolute; }
svg { display: block; flex: none; }
i, em { font-style: normal; }
b { font-weight: normal; }
u { text-decoration: underline; text-underline-offset: 2px; text-decoration-thickness: 1px; }
.chev { width: 12px; height: 8px; }
.up { transform: rotate(180deg); }
.grey { color: #999; }

/* title bar */
.titlebar { height: 34px; flex: none; background: #fff; display: flex; align-items: center; padding-left: 2px; }
.appicon { width: 24px; height: 24px; }
.apptitle { color: #999; margin-left: 5px; padding-bottom: 1px; letter-spacing: -.32px; }
.winctl { margin-left: auto; display: flex; gap: 54px; padding-right: 29px; }
.winctl svg { width: 16px; height: 16px; }

/* menu and toolbars */
.chrome { height: 125px; flex: none; background: linear-gradient(90deg, #f0f0f0 0, #f0f0f0 20%, #fbfbfb 65%); }
.menu { display: grid; grid-template-columns: 43px 45px 53px 105px 60px 87px 134px 99px 90px 60px; padding: 6px 0 0 12px; height: 36px; }
.bar { display: flex; align-items: center; width: max-content; background: linear-gradient(#fafafa, #ededed); border-radius: 4px 0 0 4px; margin-left: 3px; }
.bar1 { height: 30px; }
.bar2 { height: 26px; margin-top: 1px; }
.bar3 { height: 31px; margin-top: 1px; padding-bottom: 2px; }
.bar b, .tocbar b { width: 22px; height: 22px; flex: none; display: flex; align-items: center; justify-content: center; }
.bar b svg, .tocbar b svg { width: 16px; height: 16px; }
b.on { background: #e5effa; border: 1px solid #3399ff; }
b.dim { background: #e6ebf1; border-color: #8aa8c8; }
.grip { width: 2px; height: 20px; margin: 0 3px 0 2px; border-left: 2px dotted #b8b8b8; }
.sep { width: 1px; height: 20px; background: #bdbdbd; margin: 0 3px 0 2px; flex: none; }
.drop { width: 10px; display: flex; justify-content: center; }
.drop::after { content: ""; border: 3px solid transparent; border-top: 3px solid #000; border-bottom: 0; }
.scale { width: 147px; height: 28px; border: 1px solid #6d6d6d; background: #fff; display: flex; align-items: center; justify-content: space-between; padding: 0 8px 0 3px; margin-left: 1px; }
.percent { width: 60px; height: 28px; border: 1px solid #c4c4c4; background: #fff; display: flex; align-items: center; padding: 0 8px 0 2px; justify-content: space-between; color: #999; }
.percent span { width: 28px; height: 20px; font-size: 15px; line-height: 20px; background: #3399ff; color: #4f6f90; letter-spacing: -1px; }
.bar .end { align-self: stretch; width: 11px; margin-left: 2px; background: linear-gradient(#f0f0f0, #a8a8a8); display: flex; align-items: flex-end; justify-content: center; padding-bottom: 3px; }
.bar3 .end { margin-bottom: -2px; }
.bar .end::after { content: ""; width: 6px; height: 7px; border-top: 1px solid #000; background: conic-gradient(from -45deg at 50% 100%, #000 90deg, transparent 0) no-repeat 0 100% / 6px 4px; }

/* workspace */
.work { height: 1552px; flex: none; display: flex; }
.tocpane { width: 516px; display: flex; flex-direction: column; }
.tochead { height: 30px; background: linear-gradient(90deg, #bfcddc, #d7e4f2); display: flex; align-items: center; padding: 2px 4px 0; letter-spacing: -.4px; }
.tochead span { flex: 1; padding-bottom: 1px; }
.pin { width: 9px; height: 11px; margin: 0 8px 4px 0; }
.tclose { width: 8px; height: 8px; --w: 3; margin: 0 1px 3px 0; }
.tocbar { height: 26px; background: linear-gradient(#fcfcfc, #efefef); display: flex; align-items: center; padding-left: 4px; }
.tocbar .sep { margin: 0 2px; height: 14px; }
.tree { flex: 1; width: 513px; background: #fff; border: 1px solid #828790; margin-bottom: 2px; }
.node { height: 28px; display: flex; align-items: center; padding-left: 33px; letter-spacing: -.52px; }
.node span { margin-left: 7px; }
.root { padding-left: 6px; height: 29px; }
.root strong { margin-left: 5px; letter-spacing: -.9px; }
.exp { width: 13px; height: 13px; border: 1px solid #919191; border-radius: 1px; background: linear-gradient(#3c5a98, #3c5a98) center / 9px 1px no-repeat, linear-gradient(#fff, #ddd); }
.frame { width: 16px; height: 14px; margin-left: 12px; }
.chk { width: 12px; height: 12px; border: 1px solid #000; background: #fff; margin-left: 13px; padding: 1px; }
.chk svg { width: 8px; height: 8px; }
.sym { height: 28px; display: flex; align-items: center; padding-left: 79px; }
.dot { width: 9px; height: 9px; border: 2px solid #000; border-radius: 3px; margin-left: 5px; margin-bottom: 1px; }
.dot.lib { background: #600085; }
.dot.sch { background: #a05000; }
.patch { width: 15px; height: 11px; border: 1px solid #6e6e6e; background: #c9f3d1; }

.mapframe { width: 2328px; margin-left: 4px; height: 1551px; border: solid #696969; border-width: 2px 0 0 2px; background: #f0f0f0; border-bottom: 1px solid #e3e3e3; }
.maprow { display: flex; height: 1523px; }
.map { background: #fefefe; }
.land { fill: #c9f3d1; stroke: #6e6e6e; shape-rendering: crispEdges; }
.lines path { fill: none; stroke: #6e6e6e; stroke-width: 1px; vector-effect: non-scaling-stroke; shape-rendering: crispEdges; }
.pts { fill: none; stroke: #000; stroke-width: 8.5px; stroke-linecap: round; }
.pts path { vector-effect: non-scaling-stroke; }
.pts .core { stroke-width: 4.4px; stroke-linecap: square; }
.sch .core { stroke: #a05000; }
.lib .core { stroke: #600085; }
.vscroll { width: 23px; margin-left: 2px; display: flex; flex-direction: column; align-items: center; justify-content: space-between; padding: 9px 0 10px; color: #606060; --w: 2.4; }
.vscroll i { width: 100%; height: 1470px; background: #cdcdcd; }
.hrow { height: 24px; display: flex; align-items: center; color: #606060; --w: 2.4; }
.viewbtns { display: flex; width: 118px; align-self: flex-start; align-items: center; gap: 6px; }
.viewbtns svg { width: 8px; height: 8px; }
.viewbtns b.on { padding: 1px 3px; height: 11px; border-color: #8fc8f5; border-top: 0; background: #cce4f7; margin-right: -2px; }
.viewbtns i { width: 1px; height: 10px; background: #999; margin-right: 1px; }
.viewbtns .rf { width: 9px; }
.left { transform: rotate(90deg); margin-right: 7px; }
.right { transform: rotate(-90deg); margin-left: 7px; }
.thumb { width: 2136px; height: 23px; background: #cdcdcd; align-self: flex-start; }

.dock { flex: 1; background: #fbfbfb; padding: 2px 0 0 4px; }
.tab { background: #f0f0f0; border: 1px solid #a0a0a0; border-right: 0; border-radius: 5px 0 0 5px; color: #555; display: flex; flex-direction: column; align-items: center; padding-top: 4px; }
.tab svg { width: 16px; height: 16px; margin-bottom: 2px; }
.tab span { writing-mode: vertical-rl; font: 18px/22px "Liberation Sans", Arial, sans-serif; letter-spacing: .1px; }
.t1 { height: 91px; }
.t2 { height: 86px; margin-top: -1px; }

.status { height: 29px; flex: none; display: flex; padding: 3px 0 0 2488px; }
.coords { flex: 1; border: 1px solid #f6f6f6; padding-left: 3px; line-height: 24px; letter-spacing: -.12px; }

/* Select By Attributes window */
.dialog { position: absolute; left: 1095px; top: 275px; width: 553px; height: 794px; background: #f0f0f0; border: 1px solid #1b7fd8; box-shadow: 0 8px 22px rgba(0,0,0,.3); font: 16px/20px "Liberation Sans", Arial, sans-serif; letter-spacing: -.13px; }
.dialog header { height: 44px; background: #fff; display: flex; align-items: center; justify-content: space-between; padding: 0 16px 0 11px; font: 17.5px/24px "Open Sans", sans-serif; letter-spacing: -.25px; }
.dialog header svg { width: 16px; height: 16px; margin-bottom: 2px; }
.body { padding: 0 9px 0 11px; }
.field { display: flex; }
.field label { width: 99px; }
.f1 { padding-top: 18px; height: 49px; }
.f1 label { padding-top: 2px; }
.layersel { width: 430px; height: 29px; border: solid #808080; border-width: 2px 1px 1px 2px; border-bottom-color: #e3e3e3; background: #fff; display: flex; font: 17.5px/24px "Open Sans", sans-serif; letter-spacing: -.55px; }
.layersel svg { width: 15px; height: 15px; margin-left: 1px; }
.layersel span { flex: 1; margin-left: 4px; padding-top: 2px; }
.btn3 { width: 17px; background: #f0f0f0; border-bottom: 2px solid #808080; display: flex; justify-content: center; padding-top: 10px; }
.btn3::after { content: ""; border: 7px solid transparent; border-top-color: #000; border-bottom: 0; height: 0; }
.only { height: 20px; margin-left: 99px; display: flex; gap: 4px; line-height: 21px; margin-top: 1px; }
.only i { width: 20px; height: 20px; background: #fff; border: 1px solid #333; }
.f2 { padding-top: 8px; height: 48px; }
.f2 label { padding-top: 2px; }
.method { width: 432px; height: 28px; background: #e1e1e1; border: 1px solid #adadad; display: flex; align-items: center; justify-content: space-between; padding: 0 7px 0 3px; color: #000; }
.method svg { color: #555; }
.listrow { display: flex; gap: 3px; margin-top: -1px; }
.list { width: 515px; height: 140px; border: 1px solid #828790; background: #fff; display: flex; justify-content: space-between; padding: 1px; }
.list ul { list-style: none; margin: 0; padding: 1px 0 0 4px; }
.list li { height: 24px; line-height: 24px; padding-left: 2px; }
.list li em { display: block; width: 101px; background: #f0f0f0; margin-left: -2px; padding-left: 2px; }
.lscroll { width: 24px; background: #f0f0f0; display: flex; flex-direction: column; align-items: center; padding: 11px 0 9px; color: #606060; --w: 2.4; margin-right: 1px; }
.lscroll i { width: 24px; height: 26px; background: #cdcdcd; margin: 65px 0 9px; }
.mini { width: 6px; height: 6px; margin-top: 1px; border: 1px solid #ccc; background: radial-gradient(#000 1px, #fff 1px); }
button { font: inherit; letter-spacing: inherit; color: #000; padding: 0; background: #e1e1e1; border: 1px solid #adadad; height: 33px; width: 100%; white-space: nowrap; }
button.s { font-size: 14px; }
.ops { display: flex; padding: 10px 0 0 1px; }
.keys { display: grid; grid-template-columns: 50px 50px 50px; column-gap: 12px; grid-template-rows: 43px 45px 45px 45px 33px; width: 188px; padding-top: 1px; }
.pair { display: flex; gap: 2px; width: 48px; }
.vals { width: 340px; }
.valbox { height: 168px; border: 1px solid #828790; }
.uniq { display: flex; align-items: center; margin-top: 11px; }
.uniq button { width: 158px; margin-left: 1px; }
.uniq span { margin-left: 8px; flex: 1; }
.uniq i { width: 106px; height: 30px; border: 1px solid #ccc; box-shadow: inset 0 0 0 1px #fff; margin-bottom: 3px; }
.where { margin-top: 9px; height: 24px; line-height: 20px; letter-spacing: -.06px; }
.expr { width: 532px; height: 130px; border: 1px solid #0078d7; background: #fff; display: flex; justify-content: space-between; padding: 2px 1px 1px 2px; letter-spacing: 0; }
.expr span { height: 20px; border-right: 1px solid #000; }
.escroll { width: 25px; background: #f0f0f0; display: flex; flex-direction: column; justify-content: space-between; align-items: center; padding: 9px 0 10px; color: #bfbfbf; --w: 2.4; }
.acts { display: grid; grid-template-columns: repeat(5, 95px); column-gap: 13px; padding: 6px 0 0 1px; }
hr { margin: 11px -5px 0 0; border: 0; height: 3px; background: linear-gradient(#808080 2px, #fff 2px); }
.final { display: grid; grid-template-columns: repeat(3, 106px); column-gap: 13px; justify-content: end; padding: 10px 1px 0 0; }
button.ok { border: 2px solid #0078d7; }
```
